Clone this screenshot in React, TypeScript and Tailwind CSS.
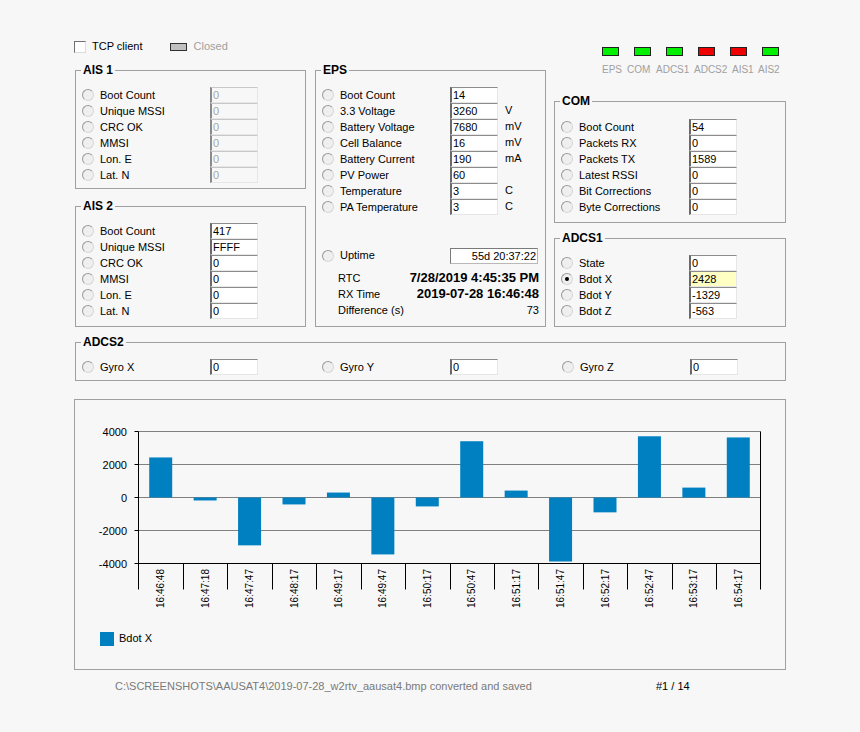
import React from 'react';

const aisLabels = ['Boot Count', 'Unique MSSI', 'CRC OK', 'MMSI', 'Lon. E', 'Lat. N'];
const ais2Values = ['417', 'FFFF', '0', '0', '0', '0'];

const epsRows = [
  { label: 'Boot Count', value: '14' },
  { label: '3.3 Voltage', value: '3260', unit: 'V' },
  { label: 'Battery Voltage', value: '7680', unit: 'mV' },
  { label: 'Cell Balance', value: '16', unit: 'mV' },
  { label: 'Battery Current', value: '190', unit: 'mA' },
  { label: 'PV Power', value: '60' },
  { label: 'Temperature', value: '3', unit: 'C' },
  { label: 'PA Temperature', value: '3', unit: 'C' },
];

const comRows = [
  { label: 'Boot Count', value: '54' },
  { label: 'Packets RX', value: '0' },
  { label: 'Packets TX', value: '1589' },
  { label: 'Latest RSSI', value: '0' },
  { label: 'Bit Corrections', value: '0' },
  { label: 'Byte Corrections', value: '0' },
];

const leds = [
  { name: 'EPS', ok: true, w: 'w-[25px]' },
  { name: 'COM', ok: true, w: 'w-[29px]' },
  { name: 'ADCS1', ok: true, w: 'w-[38px]' },
  { name: 'ADCS2', ok: false, w: 'w-[38px]' },
  { name: 'AIS1', ok: false, w: 'w-[26px]' },
  { name: 'AIS2', ok: true, w: 'w-[26px]' },
];

// Bdot X history
const samples = [
  { t: '16:46:48', v: 2428 },
  { t: '16:47:18', v: -180 },
  { t: '16:47:47', v: -2900 },
  { t: '16:48:17', v: -420 },
  { t: '16:49:17', v: 300 },
  { t: '16:49:47', v: -3450 },
  { t: '16:50:17', v: -540 },
  { t: '16:50:47', v: 3410 },
  { t: '16:51:17', v: 420 },
  { t: '16:51:47', v: -3880 },
  { t: '16:52:17', v: -900 },
  { t: '16:52:47', v: 3710 },
  { t: '16:53:17', v: 600 },
  { t: '16:54:17', v: 3640 },
];

const Radio = ({ checked }: { checked?: boolean }) => (
  <span className="flex h-[12px] w-[12px] shrink-0 items-center justify-center rounded-full border border-t-[#9a9a9a] border-l-[#9a9a9a] border-r-[#d8d8d8] border-b-[#d8d8d8] bg-[#efefef]">
    {checked && <span className="h-[4px] w-[4px] rounded-full bg-black" />}
  </span>
);

const Field = ({ value, disabled, highlight }: { value: string; disabled?: boolean; highlight?: boolean }) => (
  <div
    className={
      'h-[16px] w-[48px] shrink-0 border-t border-l-2 border-r border-b border-r-[#e6e6e6] border-b-[#e6e6e6] pl-[1px] leading-[15px] ' +
      (disabled
        ? 'border-t-[#c8c8c8] border-l-[#8a8a8a] bg-[#f7f7f7] text-[#a8a8a8]'
        : highlight
          ? 'border-t-[#8c8c8c] border-l-[#6a6a6a] bg-[#ffffc4]'
          : 'border-t-[#8c8c8c] border-l-[#6a6a6a] bg-white')
    }
  >
    {value}
  </div>
);

interface RowProps {
  label: string;
  value: string;
  unit?: string;
  disabled?: boolean;
  checked?: boolean;
  highlight?: boolean;
}

const Row = ({ label, value, unit, disabled, checked, highlight }: RowProps) => (
  <div className="flex h-[16px] items-center">
    <Radio checked={checked} />
    <span className="ml-[6px] w-[110px] leading-[16px]">{label}</span>
    <Field value={value} disabled={disabled} highlight={highlight} />
    {unit && <span className="-mt-[3px] ml-[7px] leading-[16px]">{unit}</span>}
  </div>
);

const Group = ({ title, className, children }: { title: string; className: string; children: React.ReactNode }) => (
  <fieldset className={'border border-[#a0a0a0] ' + className}>
    <legend className="ml-[5px] px-[2px] text-[12px] font-bold leading-[14px]">{title}</legend>
    {children}
  </fieldset>
);

const BdotChart = () => {
  const left = 62.5;
  const right = 684.5;
  const step = (right - left) / samples.length;
  const zero = 97.5;
  const scale = 33 / 2000;
  const ticks = [4000, 2000, 0, -2000, -4000];
  const yOf = (v: number) => zero - v * scale;

  return (
    <svg width="709" height="269" className="block">
      {ticks.map((t) => (
        <g key={t}>
          <line x1={left} x2={right} y1={yOf(t)} y2={yOf(t)} stroke={t === -4000 ? '#000' : '#808080'} />
          <line x1={left - 4} x2={left} y1={yOf(t)} y2={yOf(t)} stroke="#000" />
          <text x={51} y={yOf(t) + 4} textAnchor="end" fontSize="11" fill="#000">
            {t}
          </text>
        </g>
      ))}
      <line x1={left} x2={left} y1={31.5} y2={189.5} stroke="#000" />
      <line x1={right} x2={right} y1={31.5} y2={189.5} stroke="#000" />
      {samples.map((s, i) => {
        const cx = left + step * (i + 0.5);
        const y = yOf(s.v);
        const boundary = Math.round(left + step * (i + 1)) + 0.5;
        return (
          <g key={s.t}>
            <rect x={cx - 11.5} y={Math.min(y, zero)} width={23} height={Math.abs(zero - y)} fill="#0080c0" />
            {i < samples.length - 1 && (
              <line x1={boundary} x2={boundary} y1={163.5} y2={189.5} stroke="#000" />
            )}
            <text
              x={0}
              y={0}
              fontSize="10"
              fill="#000"
              textAnchor="end"
              transform={`translate(${cx + 3.5} 169) rotate(-90)`}
            >
              {s.t}
            </text>
          </g>
        );
      })}
      <rect x={24} y={232} width={14} height={14} fill="#0080c0" />
      <text x={43} y={242} fontSize="11" fill="#000">
        Bdot X
      </text>
    </svg>
  );
};

const App = () => {
  return (
    <div className="h-[732px] w-[860px] bg-[#f7f7f7] pl-[75px] pt-[39px] font-['Liberation_Sans',Arial,sans-serif] text-[11px] text-black">
      <div className="flex">
        {/* AIS + EPS */}
        <div className="w-[471px]">
          <div className="flex h-[24px] items-start">
            <span className="-ml-[1px] mt-[2px] h-[12px] w-[12px] border border-t-[#707070] border-l-[#707070] border-r-[#dcdcdc] border-b-[#dcdcdc] bg-white" />
            <span className="ml-[6px] leading-[14px]">TCP client</span>
            <span className="ml-[27px] mt-[4px] h-[8px] w-[17px] border border-[#303030] bg-[#c0c0c0]" />
            <span className="ml-[7px] leading-[14px] text-[#a0a0a0]">Closed</span>
          </div>
          <div className="flex gap-[9px]">
            <div className="flex w-[231px] flex-col gap-[10px]">
              <Group title="AIS 1" className="h-[126px]">
                <div className="pl-[6px] pt-[10px]">
                  {aisLabels.map((l) => (
                    <Row key={l} label={l} value="0" disabled />
                  ))}
                </div>
              </Group>
              <Group title="AIS 2" className="h-[128px]">
                <div className="pl-[6px] pt-[10px]">
                  {aisLabels.map((l, i) => (
                    <Row key={l} label={l} value={ais2Values[i]} />
                  ))}
                </div>
              </Group>
            </div>
            <Group title="EPS" className="h-[264px] w-[231px]">
              <div className="pl-[6px] pr-[6px] pt-[10px]">
                {epsRows.map((r) => (
                  <Row key={r.label} {...r} />
                ))}
                <div className="mt-[32px] flex h-[17px] items-center">
                  <Radio />
                  <span className="ml-[6px] w-[110px]">Uptime</span>
                  <div className="h-[16px] w-[88px] border border-t-[#7a7a7a] border-l-[#7a7a7a] border-r-[#b8b8b8] border-b-[#b8b8b8] bg-white pr-[1px] text-right leading-[14px]">
                    55d 20:37:22
                  </div>
                </div>
                <div className="mt-[6px] pl-[16px]">
                  <div className="flex h-[16px] items-center justify-between">
                    <span>RTC</span>
                    <span className="text-[13px] font-bold">7/28/2019 4:45:35 PM</span>
                  </div>
                  <div className="flex h-[16px] items-center justify-between">
                    <span>RX Time</span>
                    <span className="text-[13px] font-bold">2019-07-28 16:46:48</span>
                  </div>
                  <div className="flex h-[16px] items-center justify-between">
                    <span>Difference (s)</span>
                    <span>73</span>
                  </div>
                </div>
              </div>
            </Group>
          </div>
        </div>

        {/* status leds, COM, ADCS1 */}
        <div className="ml-[8px] flex w-[232px] flex-col">
          <div className="mt-[8px] flex gap-[15px] pl-[48px]">
            {leds.map((l) => (
              <span
                key={l.name}
                className={'h-[9px] w-[17px] border border-[#202020] ' + (l.ok ? 'bg-[#00f000]' : 'bg-[#f00000]')}
              />
            ))}
          </div>
          <div className="mt-[8px] flex pl-[48px] text-[10px] leading-[12px] text-[#a0a0a0]">
            {leds.map((l) => (
              <span key={l.name} className={l.w}>
                {l.name}
              </span>
            ))}
          </div>
          <Group title="COM" className="mt-[18px] h-[129px]">
            <div className="pl-[6px] pt-[11px]">
              {comRows.map((r) => (
                <Row key={r.label} {...r} />
              ))}
            </div>
          </Group>
          <Group title="ADCS1" className="mt-[8px] h-[96px]">
            <div className="pl-[6px] pt-[10px]">
              <Row label="State" value="0" />
              <Row label="Bdot X" value="2428" checked highlight />
              <Row label="Bdot Y" value="-1329" />
              <Row label="Bdot Z" value="-563" />
            </div>
          </Group>
        </div>
      </div>

      <Group title="ADCS2" className="mt-[8px] h-[46px] w-[711px]">
        <div className="grid grid-cols-[240px_240px_1fr] pl-[6px] pt-[10px]">
          <Row label="Gyro X" value="0" />
          <Row label="Gyro Y" value="0" />
          <Row label="Gyro Z" value="0" />
        </div>
      </Group>

      <div className="-ml-[1px] mt-[18px] h-[271px] w-[712px] border border-[#a0a0a0]">
        <div className="pl-[1px]">
          <BdotChart />
        </div>
      </div>

      <div className="mt-[9px] flex leading-[14px]">
        <span className="ml-[40px] w-[541px] text-[#7a7a7a]">
          C:\SCREENSHOTS\AAUSAT4\2019-07-28_w2rtv_aausat4.bmp converted and saved
        </span>
        <span>#1 / 14</span>
      </div>
    </div>
  );
};

export default App;
